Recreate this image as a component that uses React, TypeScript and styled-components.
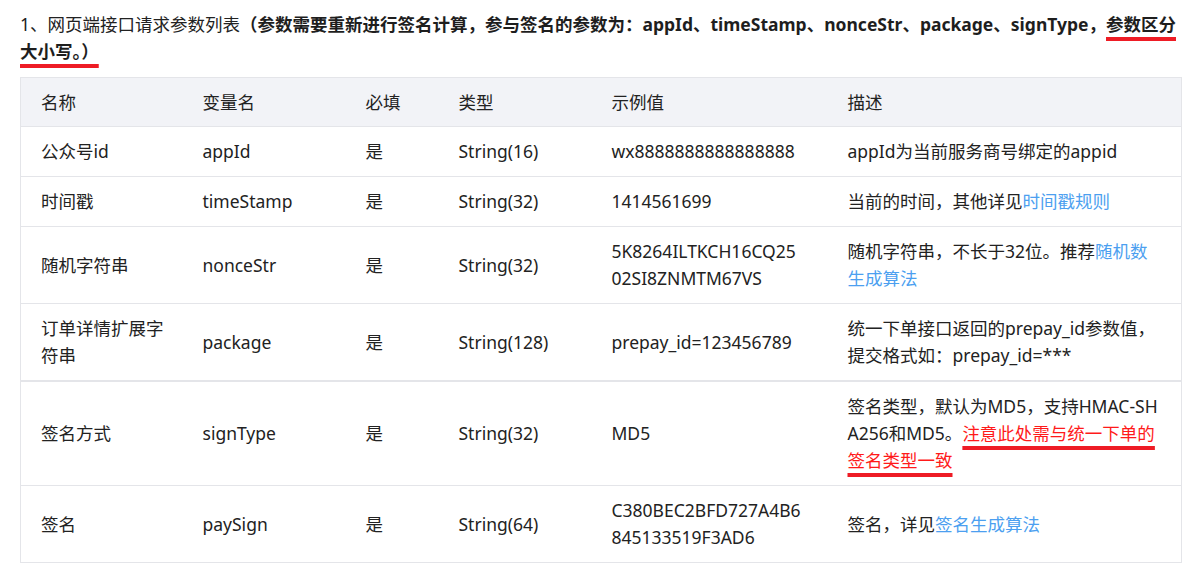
import React from "react";
import styled, { createGlobalStyle } from "styled-components";

type Row = {
    name: string;
    field: string;
    required: string;
    type: string;
    example: string[];
    desc: React.ReactNode;
    thick?: boolean;
};

const GlobalStyle = createGlobalStyle`
    html, body {
        margin: 0;
        padding: 0;
        background: #ffffff;
    }
    body {
        font-family: "Noto Sans", "Noto Sans CJK SC", sans-serif;
        color: #222;
        font-size: 17.5px;
        line-height: 27px;
    }
    * {
        box-sizing: border-box;
    }
`;

const Page = styled.div`
    width: 1198px;
    padding: 11px 17px 0 20px;
`;

const Title = styled.p`
    margin: 0 0 12px;
    width: 1164px;
`;

const Strong = styled.b`
    font-weight: 700;
    color: #1e1e1e;
`;

const Marked = styled.span`
    text-decoration: underline;
    text-decoration-color: #ee1c25;
    text-decoration-thickness: 4px;
    text-underline-offset: 6px;
    text-decoration-skip-ink: none;
`;

const Table = styled.table`
    width: 1161px;
    border-collapse: collapse;
    table-layout: fixed;
    border: 1px solid #e4e5e9;
`;

const HeadCell = styled.th`
    background: #f2f3f7;
    font-weight: 400;
    text-align: left;
    padding: 11px 18px 10px 20px;
    color: #222;
`;

const Tr = styled.tr<{ $thick?: boolean }>`
    border-bottom: ${(p) => (p.$thick ? "2px" : "1px")} solid #e4e5e9;
`;

const Td = styled.td`
    padding: 11px 18px 11px 20px;
    vertical-align: middle;
    word-break: break-all;
`;

const Link = styled.a`
    color: #4c9ff0;
    text-decoration: none;
`;

const Warn = styled(Marked)`
    color: #ff1a1a;
`;

const cols = [
    { label: "名称", w: 162 },
    { label: "变量名", w: 163 },
    { label: "必填", w: 93 },
    { label: "类型", w: 153 },
    { label: "示例值", w: 236 },
    { label: "描述", w: 354 },
];

const rows: Row[] = [
    {
        name: "公众号id",
        field: "appId",
        required: "是",
        type: "String(16)",
        example: ["wx8888888888888888"],
        desc: "appId为当前服务商号绑定的appid",
    },
    {
        name: "时间戳",
        field: "timeStamp",
        required: "是",
        type: "String(32)",
        example: ["1414561699"],
        desc: (
            <>
                当前的时间，其他详见<Link>时间戳规则</Link>
            </>
        ),
    },
    {
        name: "随机字符串",
        field: "nonceStr",
        required: "是",
        type: "String(32)",
        example: ["5K8264ILTKCH16CQ25", "02SI8ZNMTM67VS"],
        desc: (
            <>
                随机字符串，不长于32位。推荐<Link>随机数生成算法</Link>
            </>
        ),
    },
    {
        name: "订单详情扩展字符串",
        field: "package",
        required: "是",
        type: "String(128)",
        example: ["prepay_id=123456789"],
        desc: "统一下单接口返回的prepay_id参数值，提交格式如：prepay_id=***",
        thick: true,
    },
    {
        name: "签名方式",
        field: "signType",
        required: "是",
        type: "String(32)",
        example: ["MD5"],
        desc: (
            <>
                签名类型，默认为MD5，支持HMAC-SHA256和MD5。
                <Warn>注意此处需与统一下单的签名类型一致</Warn>
            </>
        ),
    },
    {
        name: "签名",
        field: "paySign",
        required: "是",
        type: "String(64)",
        example: ["C380BEC2BFD727A4B6", "845133519F3AD6"],
        desc: (
            <>
                签名，详见<Link>签名生成算法</Link>
            </>
        ),
    },
];

export default function App() {
    return (
        <Page>
            <GlobalStyle />
            <Title>
                1、网页端接口请求参数列表
                <Strong>
                    （参数需要重新进行签名计算，参与签名的参数为：appId、timeStamp、nonceStr、package、signType，
                    <Marked>参数区分大小写。）</Marked>
                </Strong>
            </Title>
            <Table>
                <colgroup>
                    {cols.map((c) => (
                        <col key={c.label} style={{ width: c.w }} />
                    ))}
                </colgroup>
                <thead>
                    <Tr>
                        {cols.map((c) => (
                            <HeadCell key={c.label}>{c.label}</HeadCell>
                        ))}
                    </Tr>
                </thead>
                <tbody>
                    {rows.map((r) => (
                        <Tr key={r.field} $thick={r.thick}>
                            <Td>{r.name}</Td>
                            <Td>{r.field}</Td>
                            <Td>{r.required}</Td>
                            <Td>{r.type}</Td>
                            <Td>
                                {r.example.map((e) => (
                                    <div key={e}>{e}</div>
                                ))}
                            </Td>
                            <Td>{r.desc}</Td>
                        </Tr>
                    ))}
                </tbody>
            </Table>
        </Page>
    );
}
